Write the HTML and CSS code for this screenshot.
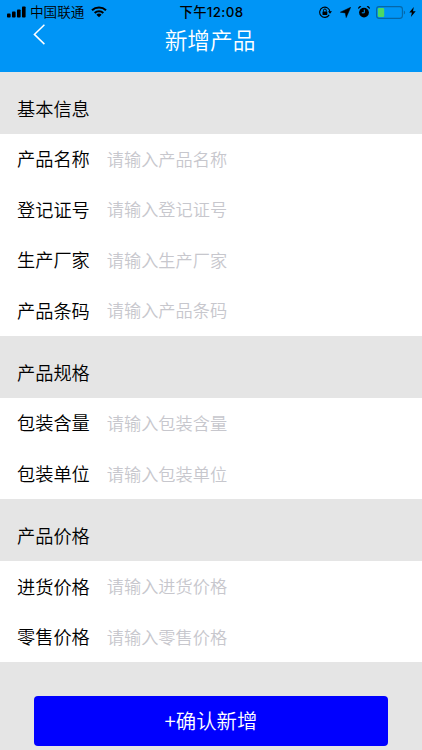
FILE: index.html
```html
<!DOCTYPE html>
<html lang="zh-CN">
<head>
  <meta charset="UTF-8">
  <meta name="viewport" content="width=device-width, initial-scale=1">
  <title>新增产品</title>
  <link rel="stylesheet" href="styles.css">
</head>
<body>
  <header class="top">
    <div class="status-bar">
      <div class="status-left">
        <svg class="signal" width="19" height="12" viewBox="0 0 19 12">
          <rect x="0" y="7.6" width="3.6" height="4" rx="0.8"/>
          <rect x="5" y="5.6" width="3.6" height="6" rx="0.8"/>
          <rect x="10" y="3.4" width="3.6" height="8.2" rx="0.8"/>
          <rect x="15" y="0.4" width="3.6" height="11.2" rx="0.8"/>
        </svg>
        <span class="carrier">中国联通</span>
        <svg class="wifi" width="16" height="12" viewBox="0 0 16 12">
          <path d="M1 4.3a10.2 10.2 0 0 1 14 0M3.7 7a6.3 6.3 0 0 1 8.6 0" fill="none" stroke="#000" stroke-width="2.1"/>
          <path d="M8 11.3L5.4 8.8a3.8 3.8 0 0 1 5.2 0z"/>
        </svg>
      </div>
      <div class="time">下午12:08</div>
      <div class="status-right">
        <svg width="13" height="12" viewBox="0 0 13 12">
          <path d="M10.2 8.9A5.1 5.1 0 1 1 10.9 5.8" fill="none" stroke="#000" stroke-width="1.1"/>
          <path d="M9 5.2h4L11 7.8z"/>
          <rect x="3.5" y="5.4" width="4.8" height="3.6" rx="0.4"/>
          <path d="M4.5 5.6V4.4a1.4 1.4 0 0 1 2.8 0v1.2" fill="none" stroke="#000"/>
        </svg>
        <svg class="location" width="11" height="11" viewBox="0 0 11 11">
          <path d="M10.7 0.3L6.2 10.6 5.3 5.9 0.3 5.2z" stroke="#000" stroke-width="0.5" stroke-linejoin="round"/>
        </svg>
        <svg class="alarm" width="12" height="12" viewBox="0 0 12 12">
          <circle cx="6" cy="6.6" r="4.9"/>
          <path d="M0.4 3.1A2 2 0 0 1 3.4 0.6zM11.6 3.1A2 2 0 0 0 8.6 0.6z"/>
          <path d="M6.3 3.6v3.2H3.8" fill="none" stroke="#0095f6"/>
        </svg>
        <svg class="battery" width="30" height="13" viewBox="0 0 30 13">
          <rect x="0.6" y="0.6" width="25.8" height="11.8" rx="2.6" fill="none" stroke="#0567a8" stroke-width="1.1"/>
          <rect x="1.9" y="2" width="6.3" height="9" rx="1" fill="#4cd964"/>
          <path d="M27.8 4.5c1.8 0.7 1.8 3.3 0 4z" fill="#0567a8"/>
        </svg>
        <svg class="bolt" width="7" height="10" viewBox="0 0 7 10">
          <path d="M4.8 0L0.3 5.5h2.6L1.9 10 6.7 4.2H4z"/>
        </svg>
      </div>
    </div>
    <div class="nav">
      <a class="back" href="#">
        <svg width="13" height="21" viewBox="0 0 13 21">
          <path d="M11.4 0.7L1.4 10.4 11.4 20.1" fill="none" stroke="#fff" stroke-width="1.5"/>
        </svg>
      </a>
      <h1>新增产品</h1>
    </div>
  </header>

  <form class="product-form">
    <h2>基本信息</h2>
    <div class="group">
      <label class="row"><span>产品名称</span><input type="text" placeholder="请输入产品名称"></label>
      <label class="row"><span>登记证号</span><input type="text" placeholder="请输入登记证号"></label>
      <label class="row"><span>生产厂家</span><input type="text" placeholder="请输入生产厂家"></label>
      <label class="row"><span>产品条码</span><input type="text" placeholder="请输入产品条码"></label>
    </div>

    <h2>产品规格</h2>
    <div class="group">
      <label class="row"><span>包装含量</span><input type="text" placeholder="请输入包装含量"></label>
      <label class="row"><span>包装单位</span><input type="text" placeholder="请输入包装单位"></label>
    </div>

    <h2>产品价格</h2>
    <div class="group">
      <label class="row"><span>进货价格</span><input type="text" placeholder="请输入进货价格"></label>
      <label class="row"><span>零售价格</span><input type="text" placeholder="请输入零售价格"></label>
    </div>

    <button class="submit-btn" type="button">+确认新增</button>
  </form>
</body>
</html>
```

FILE: styles.css
```css
* {
  box-sizing: border-box;
}
body {
  margin: 0;
  height: 750px;
  overflow: hidden;
  background: #e5e5e5;
  color: #000;
  font-family: "Noto Sans CJK SC", sans-serif;
  font-weight: 350;
}
svg {
  display: block;
  flex: none;
}
.top {
  height: 72px;
  background: #0095f6;
}
.status-bar {
  display: grid;
  grid-template-columns: 1fr auto 1fr;
  align-items: center;
  height: 24px;
  padding: 0 6px 0 7px;
  font-size: 13.6px;
  line-height: 24px;
}
.status-left, .status-right {
  display: flex;
  align-items: center;
}
.status-right {
  justify-content: flex-end;
}
.signal {
  margin-right: 4px;
}
.carrier {
  height: 24px;
  line-height: 22px;
}
.wifi {
  margin-left: 7px;
}
.time {
  font-family: Inter, "Noto Sans CJK SC", sans-serif;
  font-size: 13.3px;
  font-weight: 500;
  letter-spacing: 0.4px;
}
.location {
  margin-left: 8px;
}
.alarm {
  margin-left: 7px;
}
.battery {
  margin-left: 6px;
}
.bolt {
  margin-left: 3px;
}
.nav {
  display: grid;
  grid-template-columns: 60px 1fr 62px;
  height: 32px;
}
.back {
  padding-left: 33px;
}
.nav h1 {
  margin: 0;
  color: #fff;
  font-size: 22.7px;
  font-weight: 350;
  line-height: 32px;
  text-align: center;
}
.product-form h2 {
  margin: 0;
  height: 62px;
  padding: 11px 17px 0;
  font-size: 18.2px;
  font-weight: 350;
  line-height: 50px;
}
.group {
  background: #fff;
}
.row {
  display: flex;
  align-items: center;
  height: 50.55px;
  padding: 0 17px 2px;
  font-size: 18.2px;
}
.row input {
  flex: 1;
  min-width: 0;
  margin-left: 17px;
  padding: 0;
  border: none;
  outline: none;
  background: none;
  font-family: inherit;
  font-size: 17.2px;
}
.row input::placeholder {
  color: #c7c7cd;
  font-weight: 350;
}
.submit-btn {
  display: block;
  width: 354px;
  height: 50px;
  margin: 34px auto 0;
  padding: 0 0 2px;
  border: none;
  border-radius: 4px;
  background: #0000ff;
  color: #fff;
  font-family: inherit;
  font-size: 20.4px;
  font-weight: 350;
  cursor: pointer;
}
```
